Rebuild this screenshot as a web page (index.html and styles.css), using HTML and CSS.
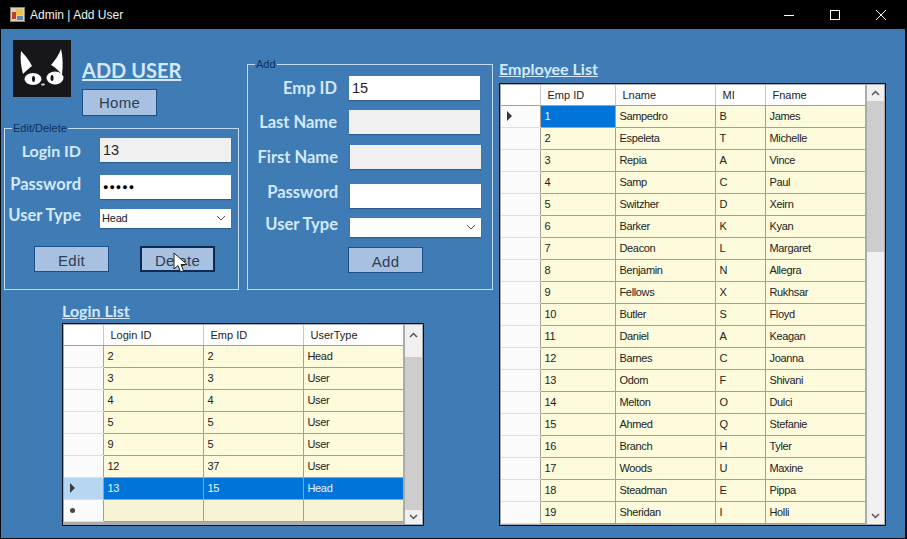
FILE: index.html
```html
<!DOCTYPE html>
<html lang="en">
<head>
    <meta charset="UTF-8">
    <title>Admin | Add User</title>
    <link rel="stylesheet" href="styles.css">
</head>
<body>
<div class="window">
    <div class="titlebar">
        <svg class="app-icon" width="15" height="15" viewBox="0 0 15 15">
            <rect x="0.5" y="0.5" width="14" height="14" fill="#d9d2bd" stroke="#8a8576"/>
            <rect x="2" y="5" width="4" height="7" fill="#b8432f"/>
            <rect x="6" y="2" width="7" height="6" fill="#efc246"/>
            <rect x="7" y="9" width="6" height="4" fill="#5d86bd"/>
        </svg>
        <span class="title-text">Admin | Add User</span>
        <div class="win-controls">
            <svg width="12" height="12" viewBox="0 0 12 12"><path d="M1 6.5h10" stroke="#fff" stroke-width="1"/></svg>
            <svg width="12" height="12" viewBox="0 0 12 12"><rect x="1.500" y="1.500" width="9" height="9" fill="none" stroke="#fff"/></svg>
            <svg width="12" height="12" viewBox="0 0 12 12"><path d="M1 1l10 10M11 1L1 11" stroke="#fff" stroke-width="1"/></svg>
        </div>
    </div>

    <div class="client">
        <div class="left-area">
            <div class="top-row">
                <div class="left-col">
                    <div class="brand">
                        <svg class="logo" width="58" height="57" viewBox="0 0 58 57">
                            <rect width="58" height="57" fill="#17171a"/>
                            <path d="M8 11c4 4 8 9 11 15-3 2-6 5-9 8-2-7-3-15-2-23z" fill="#fff"/>
                            <path d="M48 9c-2 6-6 11-10 16 4 2 8 6 11 10 1-9 1-18-1-26z" fill="#fff"/>
                            <ellipse cx="20" cy="39" rx="8.500" ry="6" fill="#fff"/>
                            <ellipse cx="42" cy="38" rx="8.500" ry="6.500" fill="#fff"/>
                            <ellipse cx="20.500" cy="39" rx="1.500" ry="3" fill="#111"/>
                            <ellipse cx="39" cy="38" rx="1.500" ry="3" fill="#111"/>
                            <ellipse cx="30" cy="44.500" rx="2" ry="1" fill="#ddd"/>
                        </svg>
                        <div class="brand-side">
                            <h1 class="page-title">ADD USER</h1>
                            <button class="btn btn-home">Home</button>
                        </div>
                    </div>

                    <fieldset class="group group-edit">
                        <legend>Edit/Delete</legend>
                        <div class="field field-login">
                            <label>Login ID</label>
                            <input class="box box-off" type="text" value="13" readonly>
                        </div>
                        <div class="field field-pass">
                            <label>Password</label>
                            <input class="box dots" type="text" value="●●●●●" readonly>
                        </div>
                        <div class="field field-type">
                            <label>User Type</label>
                            <div class="combo">Head
                                <svg width="10" height="6" viewBox="0 0 10 6"><path d="M1 1l4 4 4-4" fill="none" stroke="#555"/></svg>
                            </div>
                        </div>
                        <div class="actions">
                            <button class="btn">Edit</button>
                            <button class="btn btn-active">Delete</button>
                        </div>
                        <svg class="cursor" width="15" height="21" viewBox="0 0 15 21">
                            <path d="M1 1v16l4-3.500 2.500 6.500 3-1.200-2.500-6.300H14z" fill="#fff" stroke="#222" stroke-width="1"/>
                        </svg>
                    </fieldset>
                </div>

                <fieldset class="group group-add">
                    <legend>Add</legend>
                    <div class="field">
                        <label>Emp ID</label>
                        <input class="box" type="text" value="15" readonly>
                    </div>
                    <div class="field field-last">
                        <label>Last Name</label>
                        <input class="box box-off" type="text" readonly>
                    </div>
                    <div class="field shift">
                        <label>First Name</label>
                        <input class="box box-off" type="text" readonly>
                    </div>
                    <div class="field shift add-pass">
                        <label>Password</label>
                        <input class="box" type="text" readonly>
                    </div>
                    <div class="field shift add-type">
                        <label>User Type</label>
                        <div class="combo">
                            <svg width="10" height="6" viewBox="0 0 10 6"><path d="M1 1l4 4 4-4" fill="none" stroke="#555"/></svg>
                        </div>
                    </div>
                    <button class="btn btn-add">Add</button>
                </fieldset>
            </div>

            <div class="login-list">
                <h2 class="list-title">Login List</h2>
                <div class="grid-box grid-login">
                    <div class="grid-view">
                        <table>
                            <colgroup><col class="c-head"><col class="c-100"><col class="c-100"><col class="c-100"></colgroup>
                            <thead><tr><th></th><th>Login ID</th><th>Emp ID</th><th>UserType</th></tr></thead>
                            <tbody>
                                <tr><th></th><td>2</td><td>2</td><td>Head</td></tr>
                                <tr><th></th><td>3</td><td>3</td><td>User</td></tr>
                                <tr><th></th><td>4</td><td>4</td><td>User</td></tr>
                                <tr><th></th><td>5</td><td>5</td><td>User</td></tr>
                                <tr><th></th><td>9</td><td>5</td><td>User</td></tr>
                                <tr><th></th><td>12</td><td>37</td><td>User</td></tr>
                                <tr class="row-sel"><th><span class="arrow"></span></th><td>13</td><td>15</td><td>Head</td></tr>
                                <tr class="row-new"><th><span class="star"></span></th><td></td><td></td><td></td></tr>
                            </tbody>
                        </table>
                    </div>
                    <div class="scrollbar">
                        <svg class="sb-arrow" width="17" height="32" viewBox="0 0 17 32"><path d="M5 12l3.500-3.500L12 12" fill="none" stroke="#555" stroke-width="1.500"/></svg>
                        <div class="thumb thumb-login"></div>
                        <svg class="sb-arrow" width="17" height="14" viewBox="0 0 17 14"><path d="M5 5l3.500 3.500L12 5" fill="none" stroke="#555" stroke-width="1.500"/></svg>
                    </div>
                </div>
            </div>
        </div>

        <div class="right-area">
            <h2 class="list-title">Employee List</h2>
            <div class="grid-box grid-emp">
                <div class="grid-view">
                    <table>
                        <colgroup><col class="c-head"><col class="c-75"><col class="c-100"><col class="c-50"><col class="c-100"></colgroup>
                        <thead><tr><th></th><th>Emp ID</th><th>Lname</th><th>MI</th><th>Fname</th></tr></thead>
                        <tbody>
                            <tr><th><span class="arrow"></span></th><td class="cell-sel">1</td><td>Sampedro</td><td>B</td><td>James</td></tr>
                            <tr><th></th><td>2</td><td>Espeleta</td><td>T</td><td>Michelle</td></tr>
                            <tr><th></th><td>3</td><td>Repia</td><td>A</td><td>Vince</td></tr>
                            <tr><th></th><td>4</td><td>Samp</td><td>C</td><td>Paul</td></tr>
                            <tr><th></th><td>5</td><td>Switzher</td><td>D</td><td>Xeirn</td></tr>
                            <tr><th></th><td>6</td><td>Barker</td><td>K</td><td>Kyan</td></tr>
                            <tr><th></th><td>7</td><td>Deacon</td><td>L</td><td>Margaret</td></tr>
                            <tr><th></th><td>8</td><td>Benjamin</td><td>N</td><td>Allegra</td></tr>
                            <tr><th></th><td>9</td><td>Fellows</td><td>X</td><td>Rukhsar</td></tr>
                            <tr><th></th><td>10</td><td>Butler</td><td>S</td><td>Floyd</td></tr>
                            <tr><th></th><td>11</td><td>Daniel</td><td>A</td><td>Keagan</td></tr>
                            <tr><th></th><td>12</td><td>Barnes</td><td>C</td><td>Joanna</td></tr>
                            <tr><th></th><td>13</td><td>Odom</td><td>F</td><td>Shivani</td></tr>
                            <tr><th></th><td>14</td><td>Melton</td><td>O</td><td>Dulci</td></tr>
                            <tr><th></th><td>15</td><td>Ahmed</td><td>Q</td><td>Stefanie</td></tr>
                            <tr><th></th><td>16</td><td>Branch</td><td>H</td><td>Tyler</td></tr>
                            <tr><th></th><td>17</td><td>Woods</td><td>U</td><td>Maxine</td></tr>
                            <tr><th></th><td>18</td><td>Steadman</td><td>E</td><td>Pippa</td></tr>
                            <tr><th></th><td>19</td><td>Sheridan</td><td>I</td><td>Holli</td></tr>
                            <tr><th></th><td></td><td></td><td></td><td></td></tr>
                        </tbody>
                    </table>
                </div>
                <div class="scrollbar">
                    <svg class="sb-arrow" width="17" height="16" viewBox="0 0 17 16"><path d="M5 10l3.500-3.500L12 10" fill="none" stroke="#555" stroke-width="1.500"/></svg>
                    <div class="thumb thumb-emp"></div>
                    <div class="track"></div>
                    <svg class="sb-arrow" width="17" height="16" viewBox="0 0 17 16"><path d="M5 6l3.500 3.500L12 6" fill="none" stroke="#555" stroke-width="1.500"/></svg>
                </div>
            </div>
        </div>
    </div>
</div>
</body>
</html>
```

FILE: styles.css
```css
:root {
    --client: #3f7cb6;
    --pale: #d3e8fb;
    --navy: #0f2f5c;
    --btn: #a9c1e0;
    --cell: #fdfbdc;
    --line: #a3a193;
    --font-ui: 'Liberation Sans', sans-serif;
    --font-head: 'Lato', sans-serif;
}
* {
    box-sizing: border-box;
    margin: 0;
    padding: 0;
}
html, body {
    width: 907px;
    height: 539px;
    overflow: hidden;
    background: #06090f;
}
body {
    font-family: var(--font-ui);
    font-size: 11px;
}
.window {
    width: 904px;
    height: 538px;
    margin-left: 1px;
    display: flex;
    flex-direction: column;
}
.titlebar {
    height: 29px;
    margin-left: -1px;
    margin-right: -2px;
    padding: 0 20px 0 10px;
    flex: none;
    display: flex;
    align-items: center;
    background: #000;
    color: #f2f2f2;
}
.app-icon {
    margin-right: 5px;
}
.title-text {
    font-size: 12px;
}
.win-controls {
    margin-left: auto;
    display: flex;
    gap: 34px;
}
.client {
    flex: 1;
    display: flex;
    background: var(--client);
    padding: 11px 0 0 3px;
    position: relative;
}
.left-area {
    width: 495px;
    flex: none;
}
.top-row {
    display: flex;
    gap: 8px;
}
.left-col {
    width: 235px;
    flex: none;
}
.brand {
    display: flex;
    padding: 0 0 0 9px;
    height: 80px;
}
.logo {
    flex: none;
}
.brand-side {
    margin-left: 11px;
    padding-top: 20px;
}
.page-title {
    font-family: var(--font-head);
    font-size: 20px;
    line-height: 20px;
    font-weight: 700;
    color: var(--pale);
    text-decoration: underline;
    margin-bottom: 9px;
}
.btn {
    width: 75px;
    height: 26px;
    padding-top: 2px;
    background: var(--btn);
    border: 1px solid #1d4f86;
    color: #2c3e58;
    font-family: var(--font-ui);
    font-size: 15px;
    letter-spacing: 0.3px;
    display: block;
}
.btn-home {
    height: 27px;
    padding-top: 0;
}
.btn-active {
    border: 2px solid #0c2a52;
}
.group {
    border: 1px solid #c3dcf3;
    position: relative;
    display: block;
}
.group legend {
    margin-left: 7px;
    padding: 0 1px;
    color: var(--navy);
    font-size: 11px;
    line-height: 14px;
}
.group-edit {
    margin-top: 1px;
    height: 169px;
    padding: 3px 7px 0 0;
}
.group-add {
    margin-top: 17px;
    width: 246px;
    height: 233px;
    padding: 5px 12px 0 0;
}
.field {
    display: flex;
    align-items: center;
    justify-content: flex-end;
    gap: 19px;
    height: 24px;
    margin-bottom: 10px;
}
.field label {
    font-family: var(--font-head);
    font-weight: 700;
    font-size: 16px;
    color: var(--pale);
    white-space: nowrap;
}
.field-login {
    margin-bottom: 13px;
}
.field-pass {
    margin-bottom: 9px;
}
.field-pass label, .field-type label {
    margin-bottom: 6px;
    font-size: 16.5px;
}
.field-type {
    height: 20px;
    margin-bottom: 18px;
}
.group-add .field {
    gap: 12px;
}
.group-add .field label {
    font-size: 16.5px;
}
.group-add .shift {
    margin-right: -1px;
}
.field-last {
    margin-bottom: 11px;
}
.add-pass {
    margin-top: 15px;
    margin-bottom: 7px;
}
.add-pass label {
    margin-bottom: 8px;
}
.add-type label {
    margin-bottom: 6px;
}
.box {
    width: 131px;
    height: 24px;
    border: none;
    background: #fff;
    padding: 0 3px;
    font-family: var(--font-ui);
    font-size: 14.5px;
    color: #222;
    box-shadow: 0 1px 1px #2c5d90;
}
.box-off {
    background: #f0f0f0;
}
.dots {
    font-size: 9px;
    letter-spacing: 1px;
    color: #000;
}
.combo {
    width: 131px;
    height: 19px;
    background: #fff;
    padding: 0 2px;
    display: flex;
    align-items: center;
    justify-content: space-between;
    color: #222;
    letter-spacing: -0.2px;
    box-shadow: 0 1px 1px #2c5d90;
    flex: none;
}
.combo svg {
    margin: 0 3px 0 auto;
}
.actions {
    display: flex;
    gap: 31px;
    padding-left: 29px;
}
.btn-add {
    margin: -2px 0 0 100px;
}
.cursor {
    position: absolute;
    left: 168px;
    top: 117px;
}
.login-list {
    margin: 11px 0 0 58px;
}
.list-title {
    font-family: var(--font-head);
    font-weight: 700;
    font-size: 16px;
    line-height: 20px;
    color: var(--pale);
    text-decoration: underline;
}
.login-list .list-title {
    margin-bottom: 2px;
}
.grid-box {
    display: flex;
    background: #ababab;
    border: 1px solid #05101f;
    padding: 1px;
    overflow: hidden;
}
.grid-login {
    width: 362px;
    height: 203px;
}
.grid-emp {
    width: 387px;
    height: 443px;
}
.grid-view {
    flex: 1;
    overflow: hidden;
}
.scrollbar {
    width: 17px;
    margin-left: 2px;
    flex: none;
    display: flex;
    flex-direction: column;
    background: #f0f0f0;
}
.sb-arrow {
    display: block;
    flex: none;
}
.thumb {
    background: #cdcdcd;
    flex: 1;
}
.thumb-emp {
    flex: none;
    height: 151px;
}
.track {
    flex: 1;
}
table {
    border-collapse: collapse;
    table-layout: fixed;
    width: 100%;
}
.c-head { width: 39px; }
.c-50 { width: 50px; }
.c-75 { width: 75px; }
.c-100 { width: 100px; }
thead th {
    height: 20px;
    background: #fff;
    font-weight: 400;
    text-align: left;
    padding-left: 7px;
    color: #222;
    border-right: 1px solid #c9c9c9;
    border-bottom: 1px solid var(--line);
}
tbody th {
    height: 22px;
    background: #fbfbfb;
    border-bottom: 1px solid #dedede;
    border-right: 1px solid var(--line);
    padding-left: 5px;
    text-align: left;
    font-weight: 400;
}
td {
    height: 22px;
    background: var(--cell);
    border-right: 1px solid var(--line);
    border-bottom: 1px solid var(--line);
    padding: 0 4px;
    color: #222;
    letter-spacing: -0.35px;
    white-space: nowrap;
    overflow: hidden;
}
.row-sel th {
    background: #b6d6f2;
}
.row-sel td, .cell-sel {
    background: #0074d9;
    color: #e8f3ff;
}
.row-new td {
    background: #f6f4d4;
}
.arrow {
    display: block;
    width: 0;
    height: 0;
    margin-left: 1px;
    border-left: 5px solid #3a3a3a;
    border-top: 5px solid transparent;
    border-bottom: 5px solid transparent;
}
.star {
    display: block;
    width: 5px;
    height: 5px;
    margin-left: 1px;
    border-radius: 50%;
    background: #444;
}
.right-area {
    padding-top: 19px;
}
.right-area .list-title {
    margin-bottom: 4px;
}
```
